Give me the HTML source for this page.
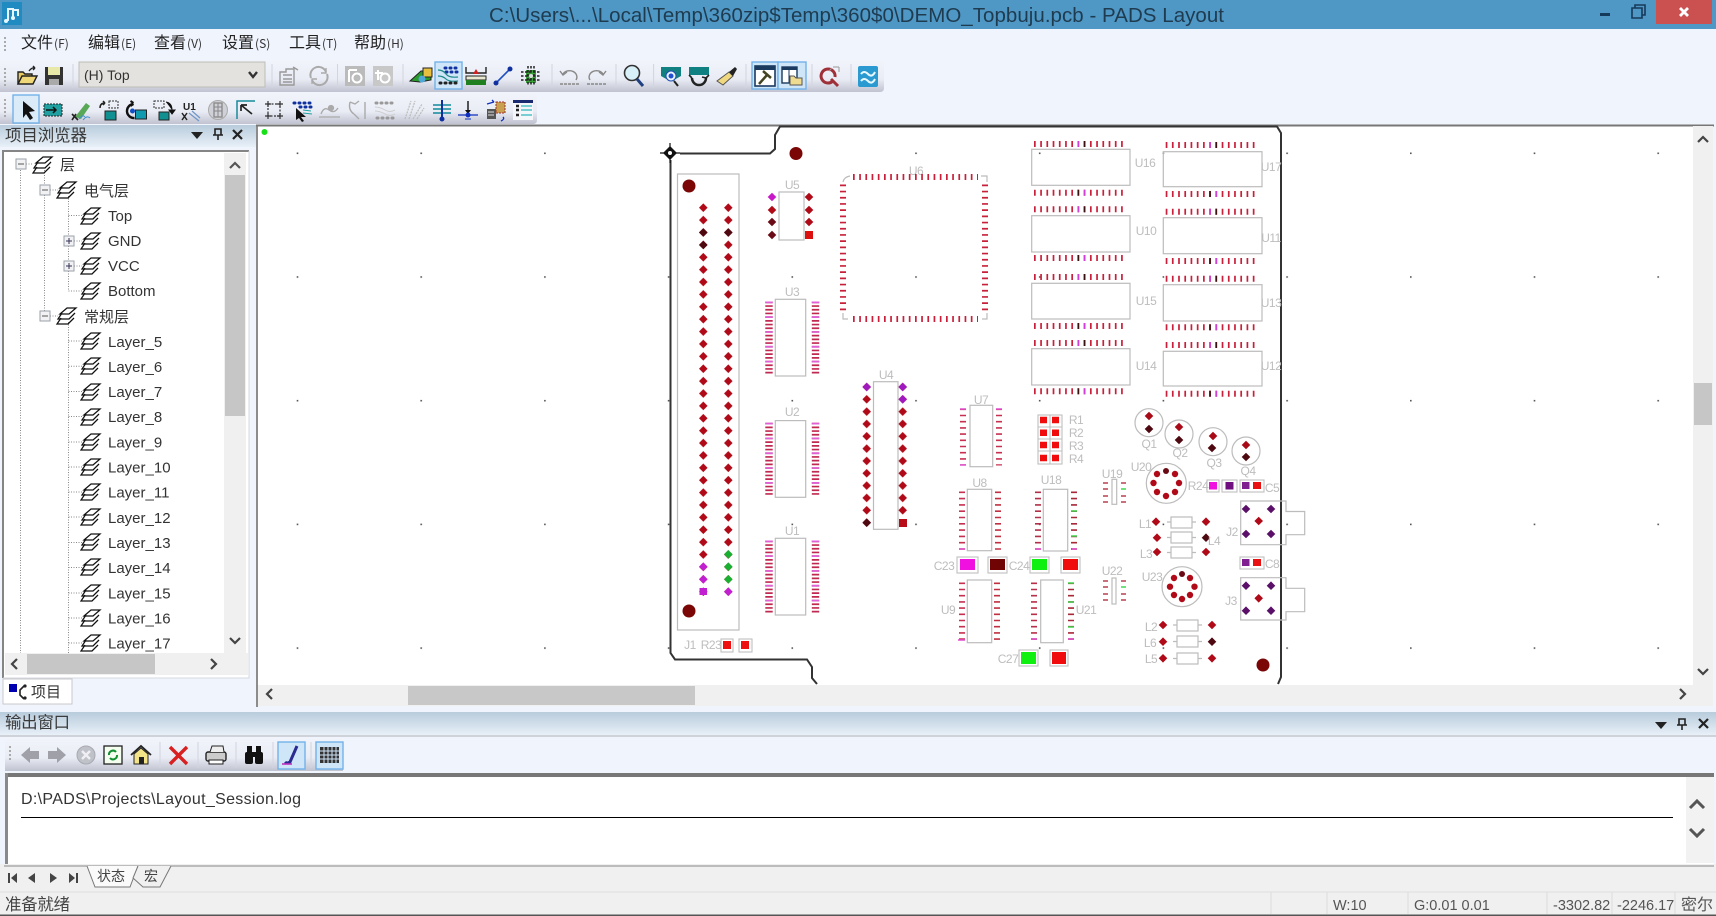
<!DOCTYPE html>
<html lang="zh"><head><meta charset="utf-8"><title>PADS Layout</title>
<style>
html,body{margin:0;padding:0;background:#f0f4fd;width:1716px;height:916px;overflow:hidden}
svg{display:block;position:absolute;left:0;top:0;filter:blur(.3px)}
text{font-family:"Liberation Sans","Noto Sans CJK SC",sans-serif;fill:#333}
.cj{font-family:"Noto Sans CJK SC","Liberation Sans",sans-serif}
.m{font-size:16px;fill:#222}
.k{font-size:12px;fill:#333}
.t{font-size:15px;fill:#333}
.p{font-size:12px;fill:#bdbdbd;text-anchor:middle;letter-spacing:-.5px}
.s{font-size:14.5px;fill:#555}
.o{fill:none;stroke:#bcbcbc;stroke-width:1.2}
.b{fill:none;stroke:#333;stroke-width:2}
.hl{fill:#cfe5f8;stroke:#72b2e8;stroke-width:1.4}
.sp{stroke:#d2d4de;stroke-width:1}
.f{fill:none;stroke:#bfbfbf;stroke-width:1.1}
</style></head><body>
<svg width="1716" height="916" viewBox="0 0 1716 916" xmlns="http://www.w3.org/2000/svg">
<defs>
<linearGradient id="tb" x1="0" y1="0" x2="0" y2="1"><stop offset="0" stop-color="#f1f4fb"/><stop offset=".6" stop-color="#e9ecf4"/><stop offset="1" stop-color="#c0c2d0"/></linearGradient>
<linearGradient id="hd" x1="0" y1="0" x2="0" y2="1"><stop offset="0" stop-color="#b8ccdc"/><stop offset="1" stop-color="#e8f0f8"/></linearGradient>
<pattern id="gr" x="296.7" y="152.5" width="123.7" height="123.7" patternUnits="userSpaceOnUse"><rect width="1.6" height="1.6" fill="#555"/></pattern>
<pattern id="dm1" x="699" y="201.5" width="25" height="12.387" patternUnits="userSpaceOnUse"><path d="M4.3 1.9L8.600 6.190 4.300 10.500 0 6.190Z" fill="#b00a18"/></pattern>
<pattern id="dm2" x="862.4" y="380.8" width="36" height="12.33" patternUnits="userSpaceOnUse"><path d="M4.3 1.9L8.600 6.170 4.300 10.500 0 6.170Z" fill="#b00a18"/></pattern>
<g id="L" fill="none" stroke="#111" stroke-width="1.25"><path d="M3 8L10 2H19L12 8Z"/><path d="M5 7L1 13H12L18 7"/><path d="M4 12L0 18H11L17 12"/></g>
<g id="ex"><rect x="-5" y="-5" width="10" height="10" fill="#f2f2f4" stroke="#9aa2aa"/><path d="M-3 0H3" stroke="#555"/></g>
<g id="ep"><rect x="-5" y="-5" width="10" height="10" fill="#f2f2f4" stroke="#9aa2aa"/><path d="M-3 0H3M0-3V3" stroke="#335"/></g>
<g id="rA"><line x1="0" x2="93.3" y1="0" y2="0" stroke="#c8203a" stroke-width="6" stroke-dasharray="1.7 4.52"/><path d="M44.3-3V3" stroke="#d040d8" stroke-width="1.7"/><path d="M50.5-3V3" stroke="#3a1010" stroke-width="1.7"/></g>
<g id="rB"><line x1="0" x2="93.3" y1="0" y2="0" stroke="#c8203a" stroke-width="6" stroke-dasharray="1.7 4.52"/><path d="M44.3-3V3" stroke="#3a1010" stroke-width="1.7"/><path d="M50.5-3V3" stroke="#d040d8" stroke-width="1.7"/></g>
<path id="dd" d="M0-4.300L4.300 0 0 4.300-4.300 0Z"/>
</defs>

<!-- title bar -->
<rect width="1716" height="29" fill="#4f97c4"/>
<rect x="2" y="2" width="20" height="23" fill="#1f8bc0"/>
<path d="M5 21l3-1V9h5v8M13 10h5v6" fill="none" stroke="#e6f6ff" stroke-width="2"/><circle cx="6" cy="21" r="2" fill="#e6f6ff"/><circle cx="13" cy="18" r="2" fill="#e6f6ff"/>
<text x="489" y="22" font-size="20.5" textLength="735" lengthAdjust="spacing" style="fill:#1f3b50">C:\Users\...\Local\Temp\360zip$Temp\360$0\DEMO_Topbuju.pcb - PADS Layout</text>
<rect x="1600" y="13" width="10" height="3" fill="#163a5a"/>
<path d="M1632 8h10v10h-10zM1635 8V5h10v10h-3" fill="none" stroke="#163a5a" stroke-width="1.6"/>
<rect x="1656" width="56" height="24" fill="#cb5050"/>
<path d="M1680 8l8 8M1688 8l-8 8" stroke="#fff" stroke-width="2.8"/>

<!-- menu -->
<rect y="29" width="1716" height="31" fill="#f0f4fd"/>
<path d="M5 37v2M5 41v2M5 45v2M5 49v2" stroke="#aaa" stroke-width="2"/>
<g class="cj">
<text class="m cj" x="21" y="48">文件<tspan class="k" dx="1">(F)</tspan></text>
<text class="m cj" x="88" y="48">编辑<tspan class="k" dx="1">(E)</tspan></text>
<text class="m cj" x="154" y="48">查看<tspan class="k" dx="1">(V)</tspan></text>
<text class="m cj" x="222" y="48">设置<tspan class="k" dx="1">(S)</tspan></text>
<text class="m cj" x="289" y="48">工具<tspan class="k" dx="1">(T)</tspan></text>
<text class="m cj" x="354" y="48">帮助<tspan class="k" dx="1">(H)</tspan></text>
</g>

<!-- toolbar 1 -->
<path d="M0 60H880q4 0 4 4V88q0 4-4 4H0Z" fill="url(#tb)"/>
<path d="M5 68v2M5 72v2M5 76v2M5 80v2M5 84v2" stroke="#aaa" stroke-width="2"/>
<g class="sp"><path d="M73 64V88M272 64V88M337.500 64V88M403 64V88M552 64V88M616 64V88M653.600 64V88M746 64V88M812 64V88M851 64V88"/></g>
<rect x="79" y="62" width="186" height="25" fill="#e4e2de" stroke="#bdbdb8"/>
<text x="84" y="80" font-size="14" style="fill:#333">(H) Top</text>
<path d="M249 72l4 5 4-5" fill="none" stroke="#333" stroke-width="2.4"/>
<rect class="hl" x="435" y="62" width="27" height="27"/>
<rect class="hl" x="752" y="62" width="26" height="27"/><rect class="hl" x="778" y="62" width="28" height="27"/>
<g transform="translate(27,76)"><path d="M-9 8V-4h5l2 2h7v3" fill="#e8c860" stroke="#222" stroke-width="1.4"/><path d="M-9 8L-5 0H10L6 8Z" fill="#f0d878" stroke="#222" stroke-width="1.4"/><path d="M2-5q3-4 6-3M8-8l-2-2M8-8l-2 2" fill="none" stroke="#222" stroke-width="1.4"/></g>
<g transform="translate(54,76)"><rect x="-9" y="-9" width="18" height="18" fill="#333"/><rect x="-6" y="-9" width="12" height="8" fill="#e8e8a8"/><rect x="-5" y="3" width="10" height="6" fill="#aaa"/></g>
<g transform="translate(289,76)" fill="none" stroke="#999" stroke-width="1.4"><path d="M-9 9V-4H-3V-7H5V9Z"/><path d="M-6-1H3M-6 3H3M-6 6H3M4-9L9-6"/></g>
<g transform="translate(319,76)" fill="none" stroke="#aaa" stroke-width="2"><path d="M-8 2A8 8 0 0 1 7-4"/><path d="M8-2A8 8 0 0 1-7 4"/><path d="M7-8V-3H2M-7 8V3H-2" stroke-width="1.4"/></g>
<g transform="translate(355,76)"><rect x="-10" y="-10" width="20" height="20" fill="#bbb"/><circle cx="2" cy="2" r="4.500" fill="none" stroke="#fff" stroke-width="2"/><path d="M-6-6V6M-6-6H2" stroke="#fff" stroke-width="2"/></g>
<g transform="translate(383,76)"><rect x="-10" y="-10" width="20" height="20" fill="#c8c8c8"/><circle cx="2" cy="2" r="4.500" fill="none" stroke="#fff" stroke-width="2"/><path d="M-5-6V4M-8-3H0" stroke="#fff" stroke-width="2"/></g>
<g transform="translate(421,76)"><path d="M-11 5L0-5H10V4L-1 6Z" fill="#2a9a2a" stroke="#222"/><rect x="2" y="-8" width="9" height="9" fill="#e8c040" stroke="#222"/><circle cx="1" cy="3" r="3.500" fill="#50a8d8"/></g>
<g transform="translate(448,76)"><path d="M-3-8h1M2-8h1M7-8h1M-2-4h1M3-4h1M8-4h1" stroke="#1030a0" stroke-width="3" stroke-linecap="round"/><path d="M-10-6q5 0 8 4t12 3M-10 0q5 0 8 3t12 2" fill="none" stroke="#208888" stroke-width="1.2"/><path d="M-8 7h1M-3 7h1M2 7h1M7 7h1" stroke="#222" stroke-width="3" stroke-linecap="round"/></g>
<g transform="translate(476,76)"><path d="M-10-9V-3H10V-9" fill="none" stroke="#222" stroke-width="1.4"/><path d="M-8-3L0-3" stroke="#222"/><path d="M-3-2L0-7 3-2Z" fill="#d02020"/><rect x="-10" y="0" width="20" height="4" fill="#e8e8d0" stroke="#222"/><rect x="-10" y="4" width="20" height="5" fill="#208020"/></g>
<g transform="translate(503,76)"><path d="M-7 7L7-7" stroke="#2050c0" stroke-width="1.6"/><circle cx="-7" cy="7" r="2.500" fill="#1030a0"/><circle cx="7" cy="-7" r="2.500" fill="#1030a0"/></g>
<g transform="translate(531,76)"><rect x="-5" y="-6" width="10" height="13" fill="#3aa03a"/><path d="M-10-4H10M-10 0H10M-10 4H10M-3-10V10M0-10V10M3-10V10" stroke="#222" stroke-width="1.5" stroke-dasharray="2.500 1.500"/><circle r="2" fill="#ddd"/></g>
<g transform="translate(570,76)" fill="none" stroke="#888" stroke-width="1.4"><path d="M-7-2A7 6 0 1 1 6 4"/><path d="M-10-5L-7-1-3-4"/><path d="M-10 8H9" stroke-dasharray="3 1"/></g>
<g transform="translate(596,76)" fill="none" stroke="#888" stroke-width="1.4"><path d="M7-2A7 6 0 1 0-6 4"/><path d="M10-5L7-1 3-4"/><path d="M-9 8H10" stroke-dasharray="3 1"/></g>
<g transform="translate(634,76)"><circle cx="-2" cy="-3" r="7.500" fill="#d8f0f8" stroke="#333" stroke-width="1.6"/><path d="M3 3L9 10" stroke="#204080" stroke-width="3"/></g>
<g transform="translate(671,76)"><path d="M-10-9H10V0L3 4H-3L-10 0Z" fill="#108080"/><circle cy="0" r="5" fill="#e8f4ff" stroke="#2050b0"/><circle r="2.500" fill="#2050d0"/><path d="M3 5l4 5" stroke="#222" stroke-width="2"/></g>
<g transform="translate(699,76)"><path d="M-10-9H10V-1H-10Z" fill="#108080"/><path d="M-7 2A7 7 0 0 0 7 2" fill="none" stroke="#222" stroke-width="2.500"/><path d="M-7 2l-3-3M7 2l3-3M7 2l-4-1" stroke="#222" stroke-width="1.6"/></g>
<g transform="translate(727,76)"><path d="M2-4L6 0-4 9-10 5Z" fill="#f0d880" stroke="#555"/><path d="M2-4L8-9 10-7 6 0" fill="#222"/></g>
<g transform="translate(765,76)"><rect x="-10" y="-10" width="20" height="20" fill="#fff" stroke="#1a3a60" stroke-width="1.6"/><rect x="-10" y="-10" width="20" height="4" fill="#1a3a60"/><path d="M-6 8L2-1M-2-5L6 2" stroke="#442" stroke-width="2.500"/></g>
<g transform="translate(792,76)"><rect x="-10" y="-9" width="15" height="16" fill="#fff" stroke="#1a3a60" stroke-width="1.4"/><rect x="-10" y="-9" width="15" height="3" fill="#1a3a60"/><path d="M-3-6V7" stroke="#1a3a60"/><path d="M-2 0h4l2 2h6v7H-2Z" fill="#f0dc90" stroke="#555"/></g>
<g transform="translate(830,76)"><path d="M5 1A7 7 0 1 0 3 5" fill="none" stroke="#a03038" stroke-width="3"/><path d="M1 3l7 7" stroke="#a03038" stroke-width="3"/><path d="M3-9l6 0M9-9v5M-1-5l3-3" fill="none" stroke="#999" stroke-width="1"/></g>
<g transform="translate(868,76)"><rect x="-10" y="-10" width="20" height="21" rx="2" fill="#2a9ad0"/><path d="M-7-2q3-4 7 0t7-2M-7 5q3-4 7 0t7-2" fill="none" stroke="#e8f8ff" stroke-width="2"/></g>

<!-- toolbar 2 -->
<path d="M0 93H533q4 0 4 4V120q0 4-4 4H0Z" fill="url(#tb)"/>
<path d="M5 99v2M5 103v2M5 107v2M5 111v2M5 115v2" stroke="#aaa" stroke-width="2"/>
<rect class="hl" x="13" y="95" width="26" height="28" style="fill:#dcebf8"/>
<path d="M23 101L35 111 29 112 33 118 30 120 26 114 23 118Z" fill="#111"/>
<g transform="translate(53,110)"><rect x="-9" y="-6" width="18" height="12" fill="#20a0a0" stroke="#222" stroke-dasharray="2 1"/><path d="M-7 0H3M0-3l3 3-3 3" stroke="#111" fill="none" stroke-width="1.5"/></g>
<g transform="translate(81,110)"><path d="M-6 7L5-7l4 3-9 13" fill="#58a858"/><path d="M-9 4l6 6M-9 10L-5 4" stroke="#222" stroke-width="1.600"/><path d="M-2 9q4-5 6-2M2 10q4-5 7-2" stroke="#4090d0" fill="none"/></g>
<g transform="translate(109,110)"><rect x="-4" y="1" width="11" height="9" fill="#109090" stroke="#222"/><rect x="0" y="-9" width="9" height="7" fill="none" stroke="#333" stroke-dasharray="2 1"/><path d="M-9-2q0-5 5-5M-4-7l-2-2M-4-7l-2 2" fill="none" stroke="#222" stroke-width="1.500"/></g>
<g transform="translate(137.500,110)"><path d="M-4-6A7 7 0 1 0-3 8" fill="none" stroke="#111" stroke-width="2.400"/><path d="M-4-7l-3-2M-4-6l-3 2" stroke="#111" stroke-width="2"/><rect x="-2" y="0" width="11" height="9" fill="#109ab0" stroke="#222"/><circle cx="-5" cy="1" r="2.500" fill="#1050c0"/></g>
<g transform="translate(164,110)"><rect x="-10" y="-9" width="10" height="7" fill="none" stroke="#333" stroke-dasharray="2 1"/><rect x="-5" y="2" width="10" height="8" fill="#109090" stroke="#222"/><path d="M2-8q6 1 6 8M8 4l-3-4H11Z" fill="#111" stroke="#111"/></g>
<g transform="translate(191,110)"><text x="-8" y="0" font-size="10" font-weight="bold" style="fill:#222">U1</text><path d="M-9 3l5 7M-4 3l-5 7" stroke="#222" stroke-width="1.500"/><path d="M-2 3l10 8M1 1l8 7" stroke="#7098c8" stroke-width="1.300"/></g>
<g transform="translate(218,110)"><circle r="9.500" fill="#d0d0d8" stroke="#aaa"/><rect x="-4" y="-7" width="8" height="14" fill="none" stroke="#888" stroke-width="1.300"/><path d="M0-7V7M-4-3H4M-4 1H4" stroke="#888"/></g>
<g transform="translate(246,110)"><path d="M-9 9V-9H9" fill="none" stroke="#1a8a9a" stroke-width="1.500"/><path d="M-5-5L6 4M-5-5H1M-5-5V1" fill="none" stroke="#222" stroke-width="1.700"/></g>
<g transform="translate(274,110)" fill="none" stroke="#333" stroke-width="1.200"><rect x="-6" y="-6" width="12" height="12" stroke-dasharray="2 1.500"/><path d="M-9-6H-3M3-6H9M-9 6H-3M3 6H9M-6-9V-3M6-9V-3M-6 3V9M6 3V9"/></g>
<g transform="translate(303,110)"><path d="M-9-7h1M-4-7h1M1-7h1M6-7h1M-3-3h1M2-3h1M7-3h1" stroke="#1030a0" stroke-width="3" stroke-linecap="round"/><path d="M0 0L8 1M0 3L9 4" stroke="#20a0a0" stroke-width="1"/><path d="M-7-2L3 7-2 7 1 11-1 12-4 8-7 10Z" fill="#111"/></g>
<g transform="translate(330,110)" fill="none" stroke="#aaa" stroke-width="1.300"><path d="M-11 7H10M-9 4q3-8 8-4t9-2"/><circle cx="1" cy="-2" r="2.500" fill="#aaa"/></g>
<g transform="translate(358,110)" fill="none" stroke="#aaa" stroke-width="1.400"><path d="M-8-8q-2 8 4 12"/><path d="M-4 4l5 5M-8-8l5 2 4-3M7-8V9"/></g>
<g transform="translate(385,110)"><path d="M-9-7h1M-4-7h1M1-7h1M6-7h1" stroke="#999" stroke-width="3" stroke-linecap="round"/><path d="M-10-3q5 0 10 3t10 0M-10 1q5 0 10 3t10 0" stroke="#ccc" fill="none"/><path d="M-8 8h1M-3 8h1M2 8h1M7 8h1" stroke="#999" stroke-width="3" stroke-linecap="round"/></g>
<g transform="translate(414,110)" fill="none" stroke="#bbb" stroke-width="1.200"><path d="M-9 9L-3-9M-5 9L1-9M-1 9L8-6M3 9L10-2" stroke-dasharray="2 1"/></g>
<g transform="translate(442,110)"><path d="M-9-5H9M-9-1H9M-9 3H9" stroke="#108a9a" stroke-width="1.600"/><path d="M0-10V10" stroke="#1030a0" stroke-width="2"/><circle cy="9" r="2.500" fill="#1030a0"/></g>
<g transform="translate(468,110)"><path d="M-10 5H10" stroke="#1030c0" stroke-width="1.200"/><path d="M0-9V2" stroke="#111" stroke-width="1.400"/><path d="M-3 0L0 4 3 0Z" fill="#111"/><path d="M-3 9H3" stroke="#1030c0"/><circle cy="5" r="2.500" fill="#1030c0"/></g>
<g transform="translate(496,110)"><rect x="-9" y="-1" width="9" height="10" fill="#555"/><rect x="0" y="-8" width="9" height="11" fill="#c8a050" stroke="#a03030" stroke-dasharray="2 1"/><path d="M-9-6L-2-8M-2-8l-2-2M7 7q2 2-2 4" stroke="#1030c0" fill="none" stroke-width="1.300"/><path d="M-8 2h6M-8 5h6" stroke="#ddd"/></g>
<g transform="translate(523,110)"><rect x="-10" y="-10" width="20" height="20" fill="#f4f6fa"/><rect x="-10" y="-10" width="20" height="3" fill="#1a2a70"/><path d="M-7-4H-4M-7 0H-4M-7 5H-4" stroke="#222" stroke-width="2.500"/><path d="M-2-4H9M-2 0H9M-2 5H9" stroke="#50c0c8" stroke-width="1.500"/></g>

<!-- project browser -->
<rect y="125" width="256" height="22" fill="url(#hd)"/>
<text class="cj" x="5" y="141" font-size="16.500" textLength="82" style="fill:#3a3a3a">项目浏览器</text>
<path d="M191 132H203L197 139Z" fill="#222"/>
<path d="M215 129h6v6h-6zM218 135v5M213 135h10" fill="none" stroke="#222" stroke-width="1.600"/>
<path d="M233 130l9 9M242 130l-9 9" stroke="#222" stroke-width="2.200"/>
<rect x="3" y="150" width="246" height="528" fill="#fff"/>
<path d="M3 678V151H249" fill="none" stroke="#858585" stroke-width="2"/>
<path d="M249 151V678H3" fill="none" stroke="#d4d8e0" stroke-width="1"/>
<g stroke="#888" stroke-width="1" stroke-dasharray="1 1.500" fill="none">
<path d="M20.500 170V653M44.500 170V316M68.500 196V291M68.500 322V653M26 164H33M50 190H58M68.500 215.500H82M74 241H82M74 266H82M68.500 291H82M50 316H58"/>
<path d="M68.500 341H82M68.500 366.300H82M68.500 391.500H82M68.500 416.500H82M68.500 442H82M68.500 467H82M68.500 492H82M68.500 517H82M68.500 542.500H82M68.500 567.500H82M68.500 593H82M68.500 618H82M68.500 643H82"/>
</g>
<use href="#ex" x="21" y="164"/><use href="#ex" x="45" y="190"/><use href="#ep" x="69" y="241"/><use href="#ep" x="69" y="266"/><use href="#ex" x="45" y="316"/>
<use href="#L" x="33" y="155"/><use href="#L" x="57" y="180"/><use href="#L" x="81" y="206"/><use href="#L" x="81" y="231"/><use href="#L" x="81" y="256"/><use href="#L" x="81" y="281"/><use href="#L" x="57" y="306"/>
<use href="#L" x="81" y="331"/><use href="#L" x="81" y="356"/><use href="#L" x="81" y="382"/><use href="#L" x="81" y="407"/><use href="#L" x="81" y="432"/><use href="#L" x="81" y="457"/><use href="#L" x="81" y="482"/><use href="#L" x="81" y="507"/><use href="#L" x="81" y="532"/><use href="#L" x="81" y="557"/><use href="#L" x="81" y="583"/><use href="#L" x="81" y="608"/><use href="#L" x="81" y="633"/>
<text class="t cj" x="60" y="170">层</text>
<text class="t cj" x="84" y="196">电气层</text>
<text class="t" x="108" y="221">Top</text>
<text class="t" x="108" y="246">GND</text>
<text class="t" x="108" y="271">VCC</text>
<text class="t" x="108" y="296">Bottom</text>
<text class="t cj" x="84" y="322">常规层</text>
<text class="t" x="108" y="347">Layer_5</text>
<text class="t" x="108" y="372">Layer_6</text>
<text class="t" x="108" y="397">Layer_7</text>
<text class="t" x="108" y="422">Layer_8</text>
<text class="t" x="108" y="447.500">Layer_9</text>
<text class="t" x="108" y="472.500">Layer_10</text>
<text class="t" x="108" y="497.500">Layer_11</text>
<text class="t" x="108" y="523">Layer_12</text>
<text class="t" x="108" y="548">Layer_13</text>
<text class="t" x="108" y="573">Layer_14</text>
<text class="t" x="108" y="598.500">Layer_15</text>
<text class="t" x="108" y="623.500">Layer_16</text>
<text class="t" x="108" y="648.500">Layer_17</text>
<rect x="224" y="153" width="22" height="500" fill="#f0f0f0"/>
<rect x="225" y="175" width="20" height="241" fill="#c6c6c6"/>
<path d="M230 168l5-5 5 5" fill="none" stroke="#555" stroke-width="2.200"/>
<path d="M230 638l5 5 5-5" fill="none" stroke="#444" stroke-width="2.200"/>
<rect x="5" y="653" width="243" height="22" fill="#f0f0f0"/>
<rect x="27" y="654" width="128" height="20" fill="#c6c6c6"/>
<path d="M17 659l-5 5 5 5M211 659l5 5-5 5" fill="none" stroke="#444" stroke-width="2.200"/>
<rect x="3" y="679" width="69" height="25" fill="#fff" stroke="#c8c8cc"/>
<rect x="9" y="684" width="8" height="8" fill="#0000b0"/>
<path d="M24 686l-4 4v5l4 4" fill="none" stroke="#222" stroke-width="1.600"/><circle cx="25" cy="686" r="1.600" fill="#222"/><circle cx="25" cy="698" r="1.600" fill="#222"/>
<text class="cj" x="31" y="697" font-size="15" style="fill:#333">项目</text>

<!-- canvas -->
<rect x="258" y="126" width="1436" height="559" fill="#fff"/>
<rect x="256" y="125" width="2" height="582" fill="#8c8c8c"/>
<rect x="256" y="124.500" width="1458" height="2" fill="#777"/>
<rect x="258" y="126" width="1436" height="559" fill="url(#gr)"/>
<circle cx="264.500" cy="132" r="3" fill="#18e018"/>

<!-- PCB -->
<path class="b" d="M680 153.500H770L775 149V135L780 126.500H1277L1281 133V677L1278 684"/>
<path class="b" d="M670.500 160V653L675 659.500H807L812 667V678L817 684"/>
<path d="M670 146L677 153 670 160 663 153Z" fill="#111"/><path d="M670 143V163M660 153H680" stroke="#111" stroke-width="1.200"/><circle cx="670" cy="153" r="2" fill="#fff"/>
<g fill="#7a0606"><circle cx="689" cy="186" r="6.500"/><circle cx="689" cy="611" r="6.500"/><circle cx="796" cy="153.500" r="6.500"/><circle cx="1263" cy="665" r="6.500"/></g>
<rect class="o" x="677.500" y="174" width="61.500" height="456"/>
<rect x="699" y="201.500" width="8.600" height="396.400" fill="url(#dm1)"/>
<rect x="724" y="201.500" width="8.600" height="396.400" fill="url(#dm1)"/>
<g fill="#4e0810"><use href="#dd" x="703.300" y="232.500"/><use href="#dd" x="703.300" y="245"/><use href="#dd" x="728.300" y="232.500"/></g>
<g fill="#c020d0"><use href="#dd" x="703.300" y="566.700"/><use href="#dd" x="703.300" y="579.300"/><rect x="699.500" y="588" width="7.500" height="7"/><use href="#dd" x="728.300" y="591.700"/></g>
<g fill="#18b030"><use href="#dd" x="728.300" y="554.300"/><use href="#dd" x="728.300" y="566.700"/><use href="#dd" x="728.300" y="579.300"/></g>
<text class="p" x="690" y="649">J1</text><text class="p" x="711" y="649">R23</text>
<rect class="f" x="721" y="639" width="12" height="13"/><rect class="f" x="739" y="639" width="13" height="13"/>
<rect x="723" y="641" width="8" height="8" fill="#ee1010"/><rect x="741" y="641" width="8" height="8" fill="#ee1010"/>

<!-- U5 -->
<rect class="o" x="779" y="192" width="25" height="48"/><text class="p" x="792" y="189">U5</text>
<g fill="#b00a18"><use href="#dd" x="772" y="210"/><use href="#dd" x="809" y="197"/><use href="#dd" x="809" y="210"/><use href="#dd" x="809" y="222"/></g>
<g fill="#6a0a14"><use href="#dd" x="772" y="222"/><use href="#dd" x="772" y="235"/></g>
<use href="#dd" x="772" y="197" fill="#c818c8"/><rect x="805" y="231" width="8" height="8" fill="#dd1010"/>

<!-- U6 -->
<path class="o" d="M843 182Q844 177 850 176M981 176H987V182M843 313V319H848M987 313V319H982"/>
<text class="p" x="916" y="175">U6</text>
<g fill="none" stroke="#c8203a"><path d="M853 177H978M853 319H978" stroke-width="6" stroke-dasharray="1.700 4.500"/><path d="M843 184.500V310.500M985 184.500V310.500" stroke-width="6" stroke-dasharray="1.700 4.500"/></g>

<!-- U3 U2 U1 -->
<g id="dipw"><rect class="o" x="775.300" y="299.300" width="30.400" height="76.700"/><g fill="none" stroke-width="7.400"><path d="M769 301.500V374.500M815.500 301.500V374.500" stroke="#c02850" stroke-dasharray="1.700 2"/><path d="M769 301.500V374.500M815.500 301.500V374.500" stroke="#e060d8" stroke-dasharray="1.700 13.100"/></g></g>
<use href="#dipw" y="121.300"/><use href="#dipw" y="239"/>
<text class="p" x="792" y="296">U3</text><text class="p" x="792" y="416">U2</text><text class="p" x="792" y="535">U1</text>

<!-- U4 -->
<rect class="o" x="873.500" y="381.700" width="24.500" height="147.600"/><text class="p" x="886" y="379">U4</text>
<rect x="862.400" y="380.800" width="8.600" height="148" fill="url(#dm2)"/>
<rect x="898.400" y="380.800" width="8.600" height="135.600" fill="url(#dm2)"/>
<g fill="#a018c0"><use href="#dd" x="866.700" y="387"/><use href="#dd" x="902.700" y="387"/><use href="#dd" x="902.700" y="399.300"/></g>
<use href="#dd" x="866.700" y="522.700" fill="#4e0810"/><rect x="899" y="519" width="8" height="8" fill="#b80c18"/>

<!-- U7 U8 U9 U18 U21 -->
<g fill="none" stroke-width="6">
<path d="M963 408.500V465.500" stroke="#c83050" stroke-dasharray="1.600 4.600"/><path d="M999 408.500V465.500" stroke="#c83050" stroke-dasharray="1.600 4.600"/>
<path d="M962 491.500V550" stroke="#c83050" stroke-dasharray="1.600 4.700"/><path d="M998 491.500V550" stroke="#c03040" stroke-dasharray="1.600 4.700"/>
<path d="M962 582.500V640" stroke="#c83050" stroke-dasharray="1.600 4.600"/><path d="M997 582.500V640" stroke="#c03040" stroke-dasharray="1.600 4.600"/>
<path d="M1038 491.500V550" stroke="#b03048" stroke-dasharray="1.600 4.700"/><path d="M1074 491.500V550" stroke="#a82838" stroke-dasharray="1.600 4.700"/>
<path d="M1034 582.500V640" stroke="#b83048" stroke-dasharray="1.600 4.600"/><path d="M1071 582.500V640" stroke="#a82838" stroke-dasharray="1.600 4.600"/>
</g>
<path d="M1071 511H1077M1071 536H1077M1068 602H1074M1068 627H1074M1068 583H1074" stroke="#40d850" stroke-width="1.600"/>
<path d="M960 465H966M996 409H1002M960 409H966M1035 549H1041M1072 549H1077M1031 639H1037M1068 639H1074M959 549H965M958 640H965" stroke="#e050d0" stroke-width="1.600"/>
<rect class="o" x="970" y="405.300" width="22.700" height="61.400"/><text class="p" x="981" y="404">U7</text>
<rect class="o" x="967.300" y="489.300" width="24.400" height="61.400"/><text class="p" x="979.500" y="487">U8</text>
<rect class="o" x="967.300" y="580" width="24.400" height="62.700"/><text class="p" x="948" y="614">U9</text>
<rect class="o" x="1043.300" y="489.300" width="24.400" height="61.700"/><text class="p" x="1051" y="484">U18</text>
<rect class="o" x="1040.700" y="580" width="22.600" height="62.700"/><text class="p" x="1086" y="614">U21</text>

<!-- caps -->
<text class="p" x="944" y="570">C23</text><text class="p" x="1019" y="570">C24</text><text class="p" x="1008" y="663">C27</text>
<rect class="f" x="957" y="557" width="21" height="16"/><rect class="f" x="988" y="557" width="19" height="16"/><rect class="f" x="1030" y="557" width="19" height="16"/><rect class="f" x="1061" y="557" width="19" height="16"/><rect class="f" x="1019" y="650" width="19" height="16"/><rect class="f" x="1050" y="650" width="18" height="16"/>
<rect x="960" y="559" width="15" height="11" fill="#f010e0"/><rect x="990" y="559" width="15" height="11" fill="#700404"/><rect x="1032" y="559" width="15" height="11" fill="#10f010"/><rect x="1063" y="559" width="15" height="11" fill="#f00c0c"/><rect x="1021" y="652" width="15" height="12" fill="#10f010"/><rect x="1052" y="652" width="14" height="12" fill="#f00c0c"/>

<!-- R1-4 -->
<rect class="f" x="1038" y="415" width="24" height="49"/><path class="f" d="M1050 415V464M1038 427H1062M1038 439H1062M1038 451H1062"/>
<path d="M1040 420H1047M1052 420H1059M1040 432.700H1047M1052 432.700H1059M1040 445H1047M1052 445H1059M1040 458H1047M1052 458H1059" stroke="#f00c0c" stroke-width="6.500"/>
<text class="p" x="1076" y="424">R1</text><text class="p" x="1076" y="437">R2</text><text class="p" x="1076" y="450">R3</text><text class="p" x="1076" y="463">R4</text>

<!-- U19 U22 -->
<rect class="o" x="1112" y="479.300" width="4.700" height="25"/><text class="p" x="1112" y="478">U19</text>
<rect class="o" x="1112" y="578" width="4" height="26"/><text class="p" x="1112" y="575">U22</text>
<path d="M1103 483H1108M1103 489H1108M1103 496H1108M1103 502H1108M1121 483H1126M1121 496H1126M1121 502H1126M1103 581H1108M1103 587H1108M1103 594H1108M1103 600H1108M1121 581H1126M1121 594H1126M1121 600H1126" stroke="#b84050" stroke-width="1.600"/>
<path d="M1121 489H1126M1121 587H1126" stroke="#40d850" stroke-width="1.600"/>

<!-- Q -->
<g class="o"><circle cx="1149" cy="422.700" r="14"/><circle cx="1179" cy="434" r="14"/><circle cx="1213" cy="441.700" r="14"/><circle cx="1246" cy="451" r="14"/><circle cx="1166.300" cy="483.300" r="20"/><circle cx="1182" cy="586.700" r="20"/></g>
<g fill="#a80a18"><use href="#dd" x="1149" y="416"/><use href="#dd" x="1179" y="427"/><use href="#dd" x="1213" y="436"/><use href="#dd" x="1246" y="445"/></g>
<g fill="#4e0810"><use href="#dd" x="1149" y="429"/><use href="#dd" x="1179" y="440"/><use href="#dd" x="1212" y="448"/><use href="#dd" x="1246" y="457"/></g>
<text class="p" x="1149" y="448">Q1</text><text class="p" x="1180" y="457">Q2</text><text class="p" x="1214" y="467">Q3</text><text class="p" x="1248" y="475">Q4</text>
<!-- U20 U23 -->
<g fill="#b00a18"><circle cx="1175" cy="474" r="3.200"/><circle cx="1179" cy="483" r="3.200"/><circle cx="1175" cy="492" r="3.200"/><circle cx="1166" cy="496" r="3.200"/><circle cx="1157" cy="492" r="3.200"/><circle cx="1153.500" cy="483" r="3.200"/><circle cx="1157" cy="474" r="3.200"/>
<circle cx="1190" cy="578" r="3.200"/><circle cx="1194.500" cy="586.700" r="3.200"/><circle cx="1190" cy="595" r="3.200"/><circle cx="1182" cy="599" r="3.200"/><circle cx="1174" cy="595" r="3.200"/><circle cx="1170" cy="586.700" r="3.200"/><circle cx="1174" cy="578" r="3.200"/></g>
<circle cx="1166" cy="471" r="3" fill="#6a0a14"/><circle cx="1182" cy="574" r="3" fill="#6a0a14"/>
<text class="p" x="1141" y="471">U20</text><text class="p" x="1152" y="581">U23</text>

<!-- R24 C5 C8 -->
<text class="p" x="1198" y="490">R24</text><text class="p" x="1272" y="492">C5</text><text class="p" x="1272" y="568">C8</text>
<rect class="f" x="1207" y="480" width="12" height="12"/><rect class="f" x="1222" y="480" width="15" height="12"/><rect class="f" x="1240" y="480" width="24" height="12"/><rect class="f" x="1240" y="557" width="24" height="12"/>
<rect x="1209" y="482" width="8" height="7.500" fill="#f010e0"/><rect x="1225.500" y="482" width="8" height="7.500" fill="#701080"/><rect x="1242" y="482" width="7.500" height="7" fill="#802090"/><rect x="1253" y="482" width="8" height="7" fill="#e81010"/>
<rect x="1242" y="559" width="7.500" height="7" fill="#802090"/><rect x="1253" y="559" width="8" height="7" fill="#e81010"/>

<!-- J2 J3 -->
<path class="o" d="M1240.700 501H1286V511.500H1304.700V534.700H1286V544.700H1240.700Z"/><text class="p" x="1232" y="536">J2</text>
<path class="o" d="M1240.700 577.700H1286V588.300H1304.700V611.700H1286V620H1240.700Z"/><text class="p" x="1231" y="605">J3</text>
<g fill="#5a1068"><use href="#dd" x="1246" y="509"/><use href="#dd" x="1271" y="509"/><use href="#dd" x="1246" y="534"/><use href="#dd" x="1271" y="534"/><use href="#dd" x="1246" y="585.700"/><use href="#dd" x="1271" y="585.700"/><use href="#dd" x="1246" y="610.700"/><use href="#dd" x="1271" y="610.700"/></g>
<g fill="#b00a18"><use href="#dd" x="1258.700" y="521"/><use href="#dd" x="1258.700" y="598.300"/></g>

<!-- L parts -->
<g class="o"><rect x="1171" y="517" width="21" height="11"/><rect x="1171" y="532" width="21" height="11"/><rect x="1171" y="547" width="21" height="11"/><rect x="1177" y="620" width="21" height="11"/><rect x="1177" y="636" width="21" height="11"/><rect x="1177" y="653" width="21" height="11"/>
<path d="M1167 522H1171M1192 522H1196M1167 537.500H1171M1192 537.500H1196M1167 552.500H1171M1192 552.500H1196M1173 625H1177M1198 625H1202M1173 641.500H1177M1198 641.500H1202M1173 658.500H1177M1198 658.500H1202"/></g>
<g fill="#b00a18"><use href="#dd" x="1156" y="521.700"/><use href="#dd" x="1206" y="521.700"/><use href="#dd" x="1157" y="537.700"/><use href="#dd" x="1157" y="552"/><use href="#dd" x="1206" y="552"/><use href="#dd" x="1163" y="625"/><use href="#dd" x="1212" y="625"/><use href="#dd" x="1163" y="641.700"/><use href="#dd" x="1163" y="658.300"/><use href="#dd" x="1212" y="658.300"/></g>
<use href="#dd" x="1206" y="537.700" fill="#4e0810"/><use href="#dd" x="1212" y="641.700" fill="#4e0810"/>
<text class="p" x="1145" y="528">L1</text><text class="p" x="1214" y="545">L4</text><text class="p" x="1146" y="558">L3</text><text class="p" x="1151" y="631">L2</text><text class="p" x="1150" y="647">L6</text><text class="p" x="1151" y="663">L5</text>

<!-- connector blocks -->
<g class="o"><rect x="1031.700" y="149.300" width="98.300" height="36"/><rect x="1031.700" y="215.700" width="98.300" height="36.300"/><rect x="1031.700" y="283.300" width="98.300" height="35.700"/><rect x="1031.700" y="348.700" width="98.300" height="36.300"/><rect x="1163.300" y="151.700" width="98.700" height="35"/><rect x="1163.300" y="217.700" width="98.700" height="36"/><rect x="1163.300" y="284.700" width="98.700" height="36.300"/><rect x="1163.300" y="351.300" width="98.700" height="34.700"/></g>
<use href="#rA" x="1034" y="144"/><use href="#rB" x="1034" y="192.700"/><use href="#rA" x="1034" y="209.300"/><use href="#rB" x="1034" y="258"/><use href="#rA" x="1034" y="277"/><use href="#rB" x="1034" y="326"/><use href="#rA" x="1034" y="343"/><use href="#rB" x="1034" y="391.300"/>
<use href="#rA" x="1165.700" y="145"/><use href="#rB" x="1165.700" y="194"/><use href="#rA" x="1165.700" y="211.700"/><use href="#rB" x="1165.700" y="261"/><use href="#rA" x="1165.700" y="278.700"/><use href="#rB" x="1165.700" y="327.300"/><use href="#rA" x="1165.700" y="345"/><use href="#rB" x="1165.700" y="393.700"/>
<text class="p" x="1145" y="167">U16</text><text class="p" x="1146" y="235">U10</text><text class="p" x="1146" y="305">U15</text><text class="p" x="1146" y="370">U14</text><text class="p" x="1271" y="171">U17</text><text class="p" x="1271" y="242">U11</text><text class="p" x="1271" y="307">U13</text><text class="p" x="1271" y="370">U12</text>

<!-- canvas scrollbars -->
<rect x="258" y="685" width="1436" height="21" fill="#f0f0f0"/>
<rect x="408" y="686" width="287" height="19" fill="#c8c8c8"/>
<path d="M272 689l-5 5 5 5M1680 689l5 5-5 5" fill="none" stroke="#444" stroke-width="2.200"/>
<rect x="1693" y="126" width="20" height="580" fill="#f0f0f0"/>
<rect x="1694" y="383" width="18" height="42" fill="#c6c6c6"/>
<path d="M1698 142l5-5 5 5M1698 669l5 5 5-5" fill="none" stroke="#444" stroke-width="2.200"/>

<!-- output -->
<rect y="712" width="1716" height="23" fill="url(#hd)"/>
<text class="cj" x="5" y="728" font-size="16.500" textLength="65" style="fill:#3a3a3a">输出窗口</text>
<path d="M1655 722H1667L1661 729Z" fill="#222"/>
<path d="M1679 719h6v6h-6zM1682 725v5M1677 725h10" fill="none" stroke="#222" stroke-width="1.600"/>
<path d="M1699 719l9 9M1708 719l-9 9" stroke="#222" stroke-width="2.200"/>
<path d="M0 736H1716" stroke="#b0b0b8"/>
<path d="M5 738H340q3 0 3 3V771H5Z" fill="url(#tb)"/>
<path d="M10 746v2M10 750v2M10 754v2M10 758v2" stroke="#aaa" stroke-width="2"/>
<path class="sp" d="M160 742V768M198 742V768M236 742V768M273 742V768M311 742V768"/>
<path d="M21 755L30 747V751H39V759H30V763Z" fill="#a0a0a8"/>
<path d="M66 755L57 747V751H48V759H57V763Z" fill="#a0a0a8"/>
<circle cx="86" cy="755" r="9" fill="#c0c2ca" stroke="#a8a8b0"/><path d="M82 751l8 8M90 751l-8 8" stroke="#f0f0f4" stroke-width="2.400"/>
<rect x="104" y="746" width="18" height="18" fill="#f4fff0" stroke="#222" stroke-width="1.300"/><path d="M109 755a4 4 0 0 1 7-3M117 755a4 4 0 0 1-7 3" fill="none" stroke="#109030" stroke-width="2"/>
<path d="M131 755L141 746 151 755" fill="none" stroke="#222" stroke-width="1.800"/><path d="M134 754V764H148V754L141 748Z" fill="#f4e488" stroke="#222"/><rect x="139" y="757" width="5" height="7" fill="#222"/>
<path d="M170 747L187 764M187 747L170 764" stroke="#d82020" stroke-width="3.400"/>
<g><rect x="206" y="752" width="20" height="9" rx="2" fill="#ccc" stroke="#222" stroke-width="1.400"/><path d="M210 752L212 746H223L224 752" fill="#eee" stroke="#222"/><rect x="209" y="760" width="14" height="4" fill="#fff" stroke="#222"/></g>
<g fill="#111"><rect x="245" y="752" width="8" height="12" rx="2"/><rect x="255" y="752" width="8" height="12" rx="2"/><rect x="247" y="746" width="5" height="7"/><rect x="256" y="746" width="5" height="7"/><rect x="252" y="752" width="4" height="5"/></g>
<rect class="hl" x="278" y="742" width="27" height="27"/>
<path d="M297 746L290 762Q287 764 285 762" fill="none" stroke="#2a2a90" stroke-width="3"/><path d="M282 764H292" stroke="#c030c0" stroke-width="1.600"/>
<rect class="hl" x="316" y="742" width="27" height="27"/>
<path d="M320 747H339V763H320Z" fill="#333"/><path d="M320 751H339M320 755H339M320 759H339M324 747V763M328 747V763M332 747V763M336 747V763" stroke="#cfe5f8"/>

<rect x="6" y="774" width="1708" height="90" fill="#fff"/>
<rect x="5" y="773" width="1709" height="4" fill="#777"/>
<rect x="5" y="773" width="3" height="91" fill="#8a8a8a"/>
<text x="21" y="804" font-size="16" textLength="280" style="fill:#333">D:\PADS\Projects\Layout_Session.log</text>
<rect x="21" y="817" width="1652" height="1" fill="#000"/>
<rect x="1686" y="777" width="28" height="86" fill="#f2f2f2"/>
<path d="M1690 808l7-7 7 7M1690 829l7 7 7-7" fill="none" stroke="#555" stroke-width="3"/>

<rect y="864" width="1716" height="52" fill="#f0f0f0"/>
<path d="M4 866H1714" stroke="#888"/>
<path d="M87 866L95 887H130L138 866" fill="#fafafa" stroke="#777"/>
<path d="M138 866L133 878 143 887H160L171 866" fill="#f0f0f0" stroke="#777"/>
<text class="cj" x="97" y="881" font-size="14" style="fill:#444">状态</text>
<text class="cj" x="144" y="881" font-size="14" style="fill:#444">宏</text>
<g fill="#444"><path d="M8 873V883H10V873ZM17 873L11 878 17 883Z"/><path d="M35 873L28 878 35 883Z"/><path d="M50 873L57 878 50 883Z"/><path d="M69 873L75 878 69 883ZM76 873V883H78V873Z"/></g>
<path d="M0 892H1716" stroke="#dedede"/>
<path d="M1271 892V914M1327 892V914M1408 892V914M1547 892V914M1612 892V914M1675 892V914" stroke="#dcdcdc"/>
<text class="cj" x="5" y="910" font-size="16.500" textLength="65" style="fill:#444">准备就绪</text>
<text class="s" x="1333" y="910">W:10</text>
<text class="s" x="1414" y="910">G:0.01 0.01</text>
<text class="s" x="1553" y="910">-3302.82</text>
<text class="s" x="1617" y="910">-2246.17</text>
<text class="cj" x="1681" y="910" font-size="16" style="fill:#555">密尔</text>
<rect y="914.500" width="1716" height="1.500" fill="#555"/>
</svg>
</body></html>
